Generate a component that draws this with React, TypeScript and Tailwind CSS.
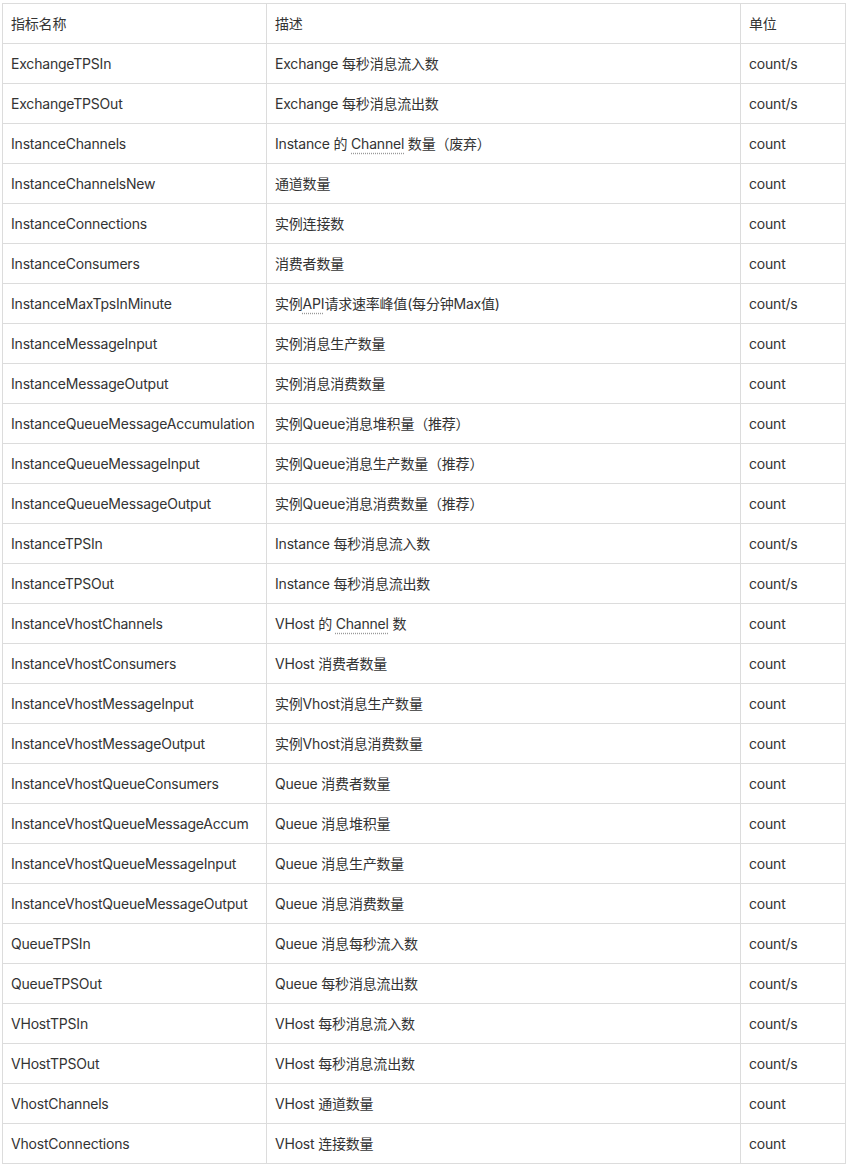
import React from 'react';

const Abbr = ({ children }: { children: React.ReactNode }) => (
  <span className="underline decoration-dotted decoration-[#999] underline-offset-4">{children}</span>
);

const DATA: [string, React.ReactNode, string][] = [
  ['ExchangeTPSIn', 'Exchange 每秒消息流入数', 'count/s'],
  ['ExchangeTPSOut', 'Exchange 每秒消息流出数', 'count/s'],
  ['InstanceChannels', <>Instance 的 <Abbr>Channel</Abbr> 数量（废弃）</>, 'count'],
  ['InstanceChannelsNew', '通道数量', 'count'],
  ['InstanceConnections', '实例连接数', 'count'],
  ['InstanceConsumers', '消费者数量', 'count'],
  ['InstanceMaxTpsInMinute', <>实例<Abbr>API</Abbr>请求速率峰值(每分钟Max值)</>, 'count/s'],
  ['InstanceMessageInput', '实例消息生产数量', 'count'],
  ['InstanceMessageOutput', '实例消息消费数量', 'count'],
  ['InstanceQueueMessageAccumulation', '实例Queue消息堆积量（推荐）', 'count'],
  ['InstanceQueueMessageInput', '实例Queue消息生产数量（推荐）', 'count'],
  ['InstanceQueueMessageOutput', '实例Queue消息消费数量（推荐）', 'count'],
  ['InstanceTPSIn', 'Instance 每秒消息流入数', 'count/s'],
  ['InstanceTPSOut', 'Instance 每秒消息流出数', 'count/s'],
  ['InstanceVhostChannels', <>VHost 的 <Abbr>Channel</Abbr> 数</>, 'count'],
  ['InstanceVhostConsumers', 'VHost 消费者数量', 'count'],
  ['InstanceVhostMessageInput', '实例Vhost消息生产数量', 'count'],
  ['InstanceVhostMessageOutput', '实例Vhost消息消费数量', 'count'],
  ['InstanceVhostQueueConsumers', 'Queue 消费者数量', 'count'],
  ['InstanceVhostQueueMessageAccum', 'Queue 消息堆积量', 'count'],
  ['InstanceVhostQueueMessageInput', 'Queue 消息生产数量', 'count'],
  ['InstanceVhostQueueMessageOutput', 'Queue 消息消费数量', 'count'],
  ['QueueTPSIn', 'Queue 消息每秒流入数', 'count/s'],
  ['QueueTPSOut', 'Queue 每秒消息流出数', 'count/s'],
  ['VHostTPSIn', 'VHost 每秒消息流入数', 'count/s'],
  ['VHostTPSOut', 'VHost 每秒消息流出数', 'count/s'],
  ['VhostChannels', 'VHost 通道数量', 'count'],
  ['VhostConnections', 'VHost 连接数量', 'count'],
];

const cell = 'h-10 border border-[#dcdcdc] px-2 py-0 text-left align-middle font-normal whitespace-nowrap';

export default function App() {
  return (
    <div className="bg-white pl-[2px] pt-[3px] font-['Inter','Noto_Sans_CJK_SC',sans-serif] text-[14px] tracking-[-0.2px] text-[#333]">
      <table className="w-[843px] table-fixed border-collapse">
        <colgroup>
          <col className="w-[264px]" />
          <col className="w-[474px]" />
          <col className="w-[105px]" />
        </colgroup>
        <thead>
          <tr>
            <th className={cell}>指标名称</th>
            <th className={cell}>描述</th>
            <th className={cell}>单位</th>
          </tr>
        </thead>
        <tbody>
          {DATA.map(([name, desc, unit]) => (
            <tr key={name}>
              <td className={cell}>{name}</td>
              <td className={cell}>{desc}</td>
              <td className={cell}>{unit}</td>
            </tr>
          ))}
        </tbody>
      </table>
    </div>
  );
}
